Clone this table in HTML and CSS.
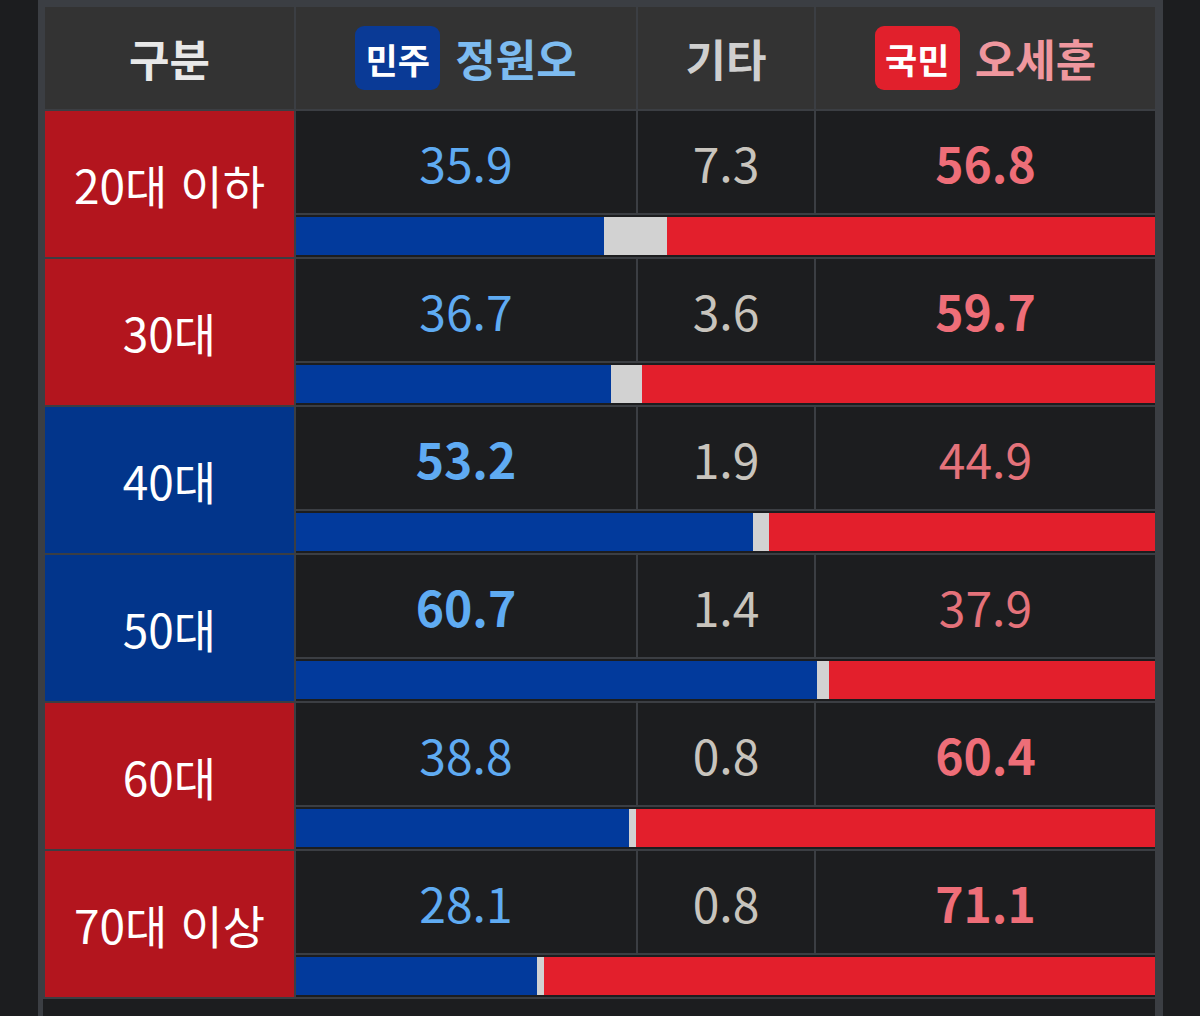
FILE: index.html
```html
<!DOCTYPE html>
<html lang="ko">
<head>
<meta charset="utf-8">
<link rel="stylesheet" href="styles.css">
</head>
<body>
<div class="frame">
  <div class="table">
    <div class="hcell head-plain">구분</div>
    <div class="hcell"><span class="badge badge-blue">민주</span><span class="name name-blue">정원오</span></div>
    <div class="hcell head-etc">기타</div>
    <div class="hcell"><span class="badge badge-red">국민</span><span class="name name-red">오세훈</span></div>

    <div class="label label-red">20대 이하</div>
    <div class="num blue">35.9</div><div class="num grey">7.3</div><div class="num red strong">56.8</div>
    <div class="bar"><span class="seg seg-blue" style="width:35.9%"></span><span class="seg seg-grey" style="width:7.3%"></span><span class="seg seg-red" style="width:56.8%"></span></div>

    <div class="label label-red">30대</div>
    <div class="num blue">36.7</div><div class="num grey">3.6</div><div class="num red strong">59.7</div>
    <div class="bar"><span class="seg seg-blue" style="width:36.7%"></span><span class="seg seg-grey" style="width:3.6%"></span><span class="seg seg-red" style="width:59.7%"></span></div>

    <div class="label label-blue">40대</div>
    <div class="num blue strong">53.2</div><div class="num grey">1.9</div><div class="num red">44.9</div>
    <div class="bar"><span class="seg seg-blue" style="width:53.2%"></span><span class="seg seg-grey" style="width:1.9%"></span><span class="seg seg-red" style="width:44.9%"></span></div>

    <div class="label label-blue">50대</div>
    <div class="num blue strong">60.7</div><div class="num grey">1.4</div><div class="num red">37.9</div>
    <div class="bar"><span class="seg seg-blue" style="width:60.7%"></span><span class="seg seg-grey" style="width:1.4%"></span><span class="seg seg-red" style="width:37.9%"></span></div>

    <div class="label label-red">60대</div>
    <div class="num blue">38.8</div><div class="num grey">0.8</div><div class="num red strong">60.4</div>
    <div class="bar"><span class="seg seg-blue" style="width:38.8%"></span><span class="seg seg-grey" style="width:0.8%"></span><span class="seg seg-red" style="width:60.4%"></span></div>

    <div class="label label-red">70대 이상</div>
    <div class="num blue">28.1</div><div class="num grey">0.8</div><div class="num red strong">71.1</div>
    <div class="bar"><span class="seg seg-blue" style="width:28.1%"></span><span class="seg seg-grey" style="width:0.8%"></span><span class="seg seg-red" style="width:71.1%"></span></div>
  </div>
  <div class="foot"></div>
</div>
</body>
</html>
```
FILE: styles.css
```css
html, body {
  margin: 0;
  padding: 0;
  background: #1c1d1f;
  height: 1016px;
  overflow: hidden;
}
body {
  font-family: "Noto Sans CJK KR", "Noto Sans", sans-serif;
}
.frame {
  margin-left: 38px;
  width: 1125px;
  background: #3b3e43;
  padding: 7px 8px 0 7px;
  box-sizing: border-box;
}
.table {
  display: grid;
  grid-template-columns: 249px 340px 176px 339px;
  grid-template-rows: 102px repeat(6, 102px 42px);
  gap: 2px;
  padding-bottom: 2px;
}
.hcell {
  background: #333333;
  display: flex;
  align-items: center;
  justify-content: center;
  font-size: 44px;
  font-weight: 700;
  line-height: 1;
}
.head-plain { color: #e8e8e8; }
.head-etc { color: #cfcfcf; }
.badge {
  width: 85px;
  height: 64px;
  border-radius: 9px;
  display: flex;
  align-items: center;
  justify-content: center;
  color: #ffffff;
  font-size: 35px;
  font-weight: 700;
  margin-right: 15px;
}
.badge-blue { background: #0a3a96; }
.badge-red { background: #e1202c; }
.name-blue { color: #7dbbf0; }
.name-red { color: #ef979e; }
.label {
  grid-column: 1;
  grid-row: span 2;
  display: flex;
  align-items: center;
  justify-content: center;
  color: #ffffff;
  font-size: 46px;
  font-weight: 400;
  line-height: 1;
}
.label-red { background: #b3151e; }
.label-blue { background: #02358b; }
.num {
  background: #1c1d1f;
  display: flex;
  align-items: center;
  justify-content: center;
  font-size: 48px;
  line-height: 1;
  font-weight: 400;
}
.num.strong { font-weight: 700; }
.blue { color: #5fabf2; }
.grey { color: #c8c4bd; }
.red { color: #e4727a; }
.red.strong { color: #ee6e78; }
.bar {
  grid-column: 2 / 5;
  background: #1c1d1f;
  padding: 2px 0;
  display: flex;
}
.seg { display: block; height: 100%; }
.seg-blue { background: #023a9c; }
.seg-grey { background: #d2d2d2; }
.seg-red { background: #e31f2c; }
.foot {
  height: 40px;
  background: #1c1d1f;
  margin-left: -2px;
}
```
